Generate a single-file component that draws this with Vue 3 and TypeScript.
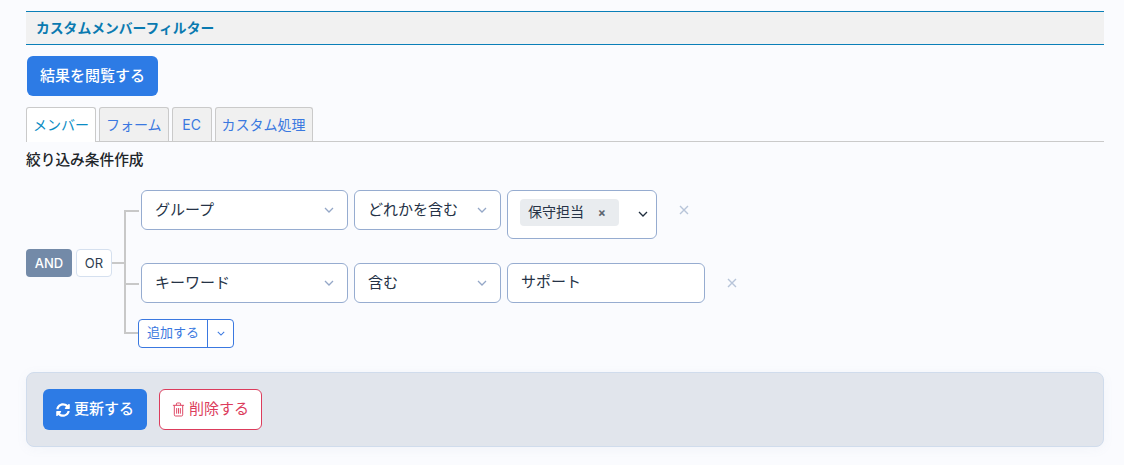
<script setup lang="ts">
const tabs = ['メンバー', 'フォーム', 'EC', 'カスタム処理']
</script>

<template>
  <div class="page">
    <h2 class="heading">カスタムメンバーフィルター</h2>
    <button class="browse">結果を閲覧する</button>
    <ul class="tabs">
      <li v-for="(t, i) in tabs" :key="t" class="tab" :class="{ active: i === 0 }">{{ t }}</li>
    </ul>
    <div class="label">絞り込み条件作成</div>
    <div class="builder">
      <div class="logic">
        <span class="and">AND</span>
        <span class="or">OR</span>
      </div>
      <div class="tree">
        <div class="row row-first">
          <div class="select s1"><span>グループ</span><svg class="chev" viewBox="0 0 10 6"><path d="M1 1l4 4 4-4" /></svg></div>
          <div class="select s2"><span>どれかを含む</span><svg class="chev" viewBox="0 0 10 6"><path d="M1 1l4 4 4-4" /></svg></div>
          <div class="multi">
            <span class="chip">保守担当<span class="chip-x">×</span></span>
            <svg class="chev dark" viewBox="0 0 10 6"><path d="M1 1l4 4 4-4" /></svg>
          </div>
          <svg class="remove" viewBox="0 0 10 10"><path d="M1 1l8 8M9 1l-8 8" /></svg>
        </div>
        <div class="row row-second">
          <div class="select s1"><span>キーワード</span><svg class="chev" viewBox="0 0 10 6"><path d="M1 1l4 4 4-4" /></svg></div>
          <div class="select s2"><span>含む</span><svg class="chev" viewBox="0 0 10 6"><path d="M1 1l4 4 4-4" /></svg></div>
          <div class="input">サポート</div>
          <svg class="remove" viewBox="0 0 10 10"><path d="M1 1l8 8M9 1l-8 8" /></svg>
        </div>
        <div class="add">
          <span class="add-main">追加する</span>
          <span class="add-toggle"><svg class="chev blue" viewBox="0 0 10 6"><path d="M1 1l4 4 4-4" /></svg></span>
        </div>
      </div>
    </div>
    <div class="footer">
      <button class="update">
        <svg class="ico" viewBox="0 0 512 512"><path fill="#fff" d="M370.7 133.3C339.5 104 298.9 88 255.800 88c-77.500.1-144.300 53.200-162.800 126.900-1.300 5.400-6.100 9.200-11.700 9.200H24.100c-7.500 0-13.200-6.800-11.800-14.200C33.900 94.900 134.800 8 256 8c66.400 0 126.800 26.100 171.300 68.700L463 41c15.100-15.100 41-4.400 41 17v134c0 13.300-10.700 24-24 24H346c-21.400 0-32.100-25.900-17-41l41.700-41.700zM32 296h134c21.400 0 32.100 25.900 17 41l-41.700 41.700c31.200 29.300 71.800 45.300 114.900 45.300 77.400-.1 144.300-53.100 162.800-126.800 1.300-5.400 6.100-9.200 11.700-9.200h57.300c7.500 0 13.200 6.800 11.800 14.200C478.100 417.100 377.200 504 256 504c-66.400 0-126.800-26.100-171.300-68.700L49 471c-15.100 15.100-41 4.400-41-17V320c0-13.300 10.700-24 24-24z" /></svg>
        <span>更新する</span>
      </button>
      <button class="delete">
        <svg class="ico trash" viewBox="0 0 14 16"><path d="M1 3.500h12M4.700 3.500V2a1 1 0 0 1 1-1h2.600a1 1 0 0 1 1 1v1.500M2.500 3.500v10.200a1.300 1.300 0 0 0 1.300 1.300h6.400a1.300 1.300 0 0 0 1.300-1.300V3.500M5 6.500v6M7 6.500v6M9 6.500v6" /></svg>
        <span>削除する</span>
      </button>
    </div>
  </div>
</template>

<style>
html, body { margin: 0; background: #fafbfe; }
</style>

<style scoped>
.page {
  box-sizing: border-box;
  width: 1124px;
  height: 465px;
  padding: 11px 20px 0 26px;
  overflow: hidden;
  font-family: Inter, "Noto Sans CJK JP", sans-serif;
  color: #212529;
  background: #fafbfe;
}
.heading {
  margin: 0;
  height: 34px;
  box-sizing: border-box;
  padding-left: 10px;
  border-top: 1px solid #0a7fb8;
  border-bottom: 1px solid #0a7fb8;
  background: #f1f1f1;
  color: #0a7ab0;
  font-size: 13.800px;
  font-weight: 700;
  line-height: 32px;
}
button { font-family: inherit; cursor: pointer; }
.browse {
  display: block;
  width: 131px;
  height: 40px;
  margin: 11px 0 11px 1px;
  padding: 0 0 4px;
  border: 0;
  border-radius: 6px;
  background: #2d7be5;
  color: #fff;
  font-size: 15px;
  font-weight: 500;
}
.tabs {
  display: flex;
  gap: 3px;
  height: 35px;
  box-sizing: border-box;
  margin: 0;
  padding: 0;
  list-style: none;
  border-bottom: 1px solid #cacaca;
}
.tab {
  box-sizing: border-box;
  min-width: 40px;
  height: 34px;
  padding: 0 6px;
  border: 1px solid #cacaca;
  border-bottom: 0;
  border-radius: 3px 3px 0 0;
  background: #f0f0f0;
  color: #3a78e0;
  font-size: 14px;
  line-height: 33px;
  text-align: center;
}
.tab.active {
  height: 35px;
  background: #fff;
  color: #0a8cc4;
}
.label {
  margin-top: 9px;
  font-size: 14.700px;
  font-weight: 500;
  line-height: 18px;
  height: 18px;
}
.builder {
  display: flex;
  align-items: flex-start;
  margin-top: 21px;
}
.logic {
  display: flex;
  gap: 4px;
  margin-top: 59px;
  font-size: 13px;
  line-height: 26px;
  text-align: center;
  position: relative;
}
.logic::after {
  content: '';
  position: absolute;
  left: 86px;
  top: 13px;
  width: 13px;
  height: 2px;
  background: #c8c8c8;
}
.and {
  width: 46px;
  height: 28px;
  border-radius: 4px;
  background: #738aa8;
  color: #fff;
  font-weight: 500;
  line-height: 28px;
}
.or {
  box-sizing: border-box;
  width: 36px;
  height: 28px;
  border: 1px solid #d5e0ef;
  border-radius: 4px;
  background: #fff;
  color: #2e3d50;
}
.tree {
  position: relative;
  margin-left: 29px;
}
.tree::before {
  content: '';
  position: absolute;
  left: -17px;
  top: 20px;
  width: 2px;
  height: 124px;
  background: #c8c8c8;
}
.row {
  position: relative;
  display: flex;
  align-items: flex-start;
  gap: 6px;
}
.row::before, .add::before {
  content: '';
  position: absolute;
  left: -15px;
  width: 13px;
  height: 2px;
  background: #c8c8c8;
}
.row::before { top: 20px; }
.row-second { margin-top: 24px; }
.row-first { height: 49px; }
.select, .multi, .input {
  box-sizing: border-box;
  border: 1px solid #96acd0;
  border-radius: 6px;
  background: #fff;
  font-size: 15px;
  color: #253246;
}
.select {
  display: flex;
  align-items: center;
  justify-content: space-between;
  height: 40px;
  padding: 0 13px;
}
.select span { margin-top: -4px; }
.s1 { width: 207px; }
.s2 { width: 147px; }
.chev {
  width: 10px;
  height: 6px;
  fill: none;
  stroke: #94a7c7;
  stroke-width: 1.300;
  flex: none;
}
.chev.dark { stroke: #1f2d3d; stroke-width: 1.300; }
.chev.blue { stroke: #3a78e0; width: 8px; height: 5px; }
.multi {
  position: relative;
  width: 150px;
  height: 49px;
  padding: 8px 0 0 12px;
}
.multi .chev { position: absolute; right: 8px; top: 20px; }
.chip {
  display: flex;
  align-items: center;
  justify-content: space-between;
  box-sizing: border-box;
  width: 99px;
  height: 27px;
  padding: 0 13px 3px 8px;
  border-radius: 4px;
  background: #e9ecef;
  font-size: 14px;
}
.chip-x { font-size: 12px; font-weight: 700; color: #5c6470; margin-top: 3px; }
.input {
  width: 198px;
  height: 40px;
  padding-left: 13px;
  line-height: 35px;
}
.remove {
  width: 10px;
  height: 10px;
  margin: 15px 0 0 16px;
  fill: none;
  stroke: #b7c4d9;
  stroke-width: 1.400;
  flex: none;
}
.add {
  position: relative;
  display: flex;
  width: 96px;
  height: 29px;
  box-sizing: border-box;
  margin: 16px 0 0 -3px;
  border: 1px solid #3a78e0;
  border-radius: 4px;
  background: #fff;
  color: #3a78e0;
  font-size: 13px;
  line-height: 25px;
}
.add::before { top: 12px; left: -14px; }
.add-main { width: 68px; text-align: center; border-right: 1px solid #3a78e0; }
.add-toggle { flex: 1; display: flex; align-items: center; justify-content: center; }
.footer {
  display: flex;
  gap: 12px;
  box-sizing: border-box;
  height: 75px;
  margin-top: 24px;
  padding: 16px;
  border: 1px solid #d0dcec;
  border-radius: 8px;
  background: #e1e5ec;
  box-shadow: 0 2px 12px rgba(120, 140, 170, 0.06);
}
.update, .delete {
  display: flex;
  align-items: center;
  justify-content: center;
  gap: 4px;
  height: 41px;
  padding: 0;
  border-radius: 6px;
  font-size: 15px;
}
.update span, .delete span { margin-top: -4px; }
.update { width: 104px; border: 0; background: #2d7be5; color: #fff; font-weight: 500; }
.delete { width: 103px; border: 1px solid #dc3c5c; background: #fff; color: #dc3c5c; gap: 4px; }
.ico { width: 14px; height: 14px; }
.trash { width: 13px; height: 15px; fill: none; stroke: #dc3c5c; stroke-width: 1; }
</style>
